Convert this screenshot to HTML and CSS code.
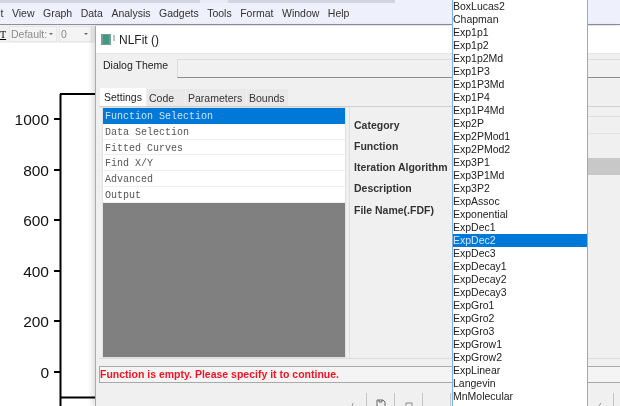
FILE: index.html
```html
<!DOCTYPE html>
<html lang="en">
<head>
<meta charset="utf-8">
<title>NLFit</title>
<link rel="stylesheet" href="styles.css">
</head>
<body>
<div class="app">
  <div class="topstrip"></div>
  <nav class="menubar">
    <span class="menu">t</span><span class="menu">View</span><span class="menu">Graph</span><span class="menu">Data</span><span class="menu">Analysis</span><span class="menu">Gadgets</span><span class="menu">Tools</span><span class="menu">Format</span><span class="menu">Window</span><span class="menu">Help</span>
  </nav>
  <div class="toolbar">
    <span class="tt">T</span>
    <span class="tbcombo wide">Default:<i class="arrow"></i></span>
    <span class="tbcombo num">0<i class="arrow"></i></span>
  </div>
  <div class="canvas">
    <svg class="plot" width="96" height="363" viewBox="0 0 96 363">
      <path class="axis" d="M60.500 51V363M60 51H96M60 354.500H96"/>
      <path class="tick" d="M54 76H60M54 127H60M54 177H60M54 228H60M54 278H60M54 329H60"/>
      <text x="49" y="82">1000</text>
      <text x="49" y="133">800</text>
      <text x="49" y="183">600</text>
      <text x="49" y="234">400</text>
      <text x="49" y="284">200</text>
      <text x="49" y="335">0</text>
    </svg>
  </div>
</div>

<section class="dialog">
  <header class="titlebar">
    <svg class="appicon" width="15" height="13" viewBox="0 0 15 13">
      <rect x="0" y="1" width="10" height="11" fill="#7d9a9c"/>
      <rect x="2" y="2" width="6" height="9" fill="#3c9a80"/>
      <rect x="12" y="2" width="2" height="6" fill="#b5c6c4"/>
    </svg>
    <span class="dtitle">NLFit ()</span>
  </header>
  <div class="themerow">
    <span class="themelabel">Dialog Theme</span>
    <span class="themebox"></span>
  </div>
  <div class="tabs">
    <span class="tab active t-settings">Settings</span>
    <span class="tab t-code">Code</span>
    <span class="tab t-params">Parameters</span>
    <span class="tab t-bounds">Bounds</span>
  </div>
  <div class="pane">
    <div class="tree">
      <div class="node selected">Function Selection</div>
      <div class="node">Data Selection</div>
      <div class="node">Fitted Curves</div>
      <div class="node">Find X/Y</div>
      <div class="node">Advanced</div>
      <div class="node">Output</div>
      <div class="treefill"></div>
    </div>
    <div class="form">
      <div class="field"><label>Category</label><span class="value boxed"></span></div>
      <div class="field"><label>Function</label></div>
      <div class="field"><label>Iteration Algorithm</label><span class="value grey"></span></div>
      <div class="field"><label>Description</label></div>
      <div class="field lastfield"><label>File Name(.FDF)</label></div>
    </div>
  </div>
  <div class="status">Function is empty. Please specify it to continue.</div>
  <div class="buttons">
    <span class="btn"><svg width="8" height="4" viewBox="0 0 8 4"><path d="M3 4L4 1" stroke="#999" fill="none"/></svg></span>
    <span class="btn"><svg width="10" height="7" viewBox="0 0 10 7"><path d="M1 7V1H7L9 3V7M3 1V3H6V1" stroke="#666" fill="none"/></svg></span>
    <span class="btn"><svg width="8" height="4" viewBox="0 0 8 4"><path d="M1 4V1H7V4" stroke="#888" fill="none"/></svg></span>
    <span class="btn"></span>
    <span class="btn last"><svg width="8" height="4" viewBox="0 0 8 4"><path d="M3 4L5 1" stroke="#999" fill="none"/></svg></span>
  </div>
</section>

<ul class="dropdown">
  <li>BoxLucas2</li><li>Chapman</li><li>Exp1p1</li><li>Exp1p2</li><li>Exp1p2Md</li><li>Exp1P3</li><li>Exp1P3Md</li><li>Exp1P4</li><li>Exp1P4Md</li><li>Exp2P</li><li>Exp2PMod1</li><li>Exp2PMod2</li><li>Exp3P1</li><li>Exp3P1Md</li><li>Exp3P2</li><li>ExpAssoc</li><li>Exponential</li><li>ExpDec1</li><li class="hl">ExpDec2</li><li>ExpDec3</li><li>ExpDecay1</li><li>ExpDecay2</li><li>ExpDecay3</li><li>ExpGro1</li><li>ExpGro2</li><li>ExpGro3</li><li>ExpGrow1</li><li>ExpGrow2</li><li>ExpLinear</li><li>Langevin</li><li>MnMolecular</li>
</ul>
</body>
</html>
```
FILE: styles.css
```css
* { box-sizing: border-box; }
html, body { margin: 0; padding: 0; width: 620px; height: 406px; overflow: hidden; background: #fff; }
body { position: relative; font-family: "Liberation Sans", Arial, sans-serif; font-size: 11px; color: #222; filter: blur(.35px); }

.app { display: flex; flex-direction: column; height: 406px; }
.topstrip { height: 3px; flex: none; background: linear-gradient(90deg, #d3d4e0 0 200px, #e9eaf3 200px 228px, #d3d4e0 228px 395px, #eef0fb 395px); }
.menubar { height: 22px; flex: none; display: flex; align-items: center; gap: 8.500px; padding-left: .5px; padding-bottom: 2px; background: #eef0fb; border-bottom: 1px solid #8f8f98; font-size: 10.500px; color: #333; }
.toolbar { height: 19px; flex: none; display: flex; align-items: center; gap: 2px; background: #f0f0f0; border-bottom: 1px solid #e2e2e2; font-size: 10.500px; color: #8b8b8b; }
.tt { width: 7px; font-family: "Liberation Serif", serif; font-size: 10px; color: #000; text-decoration: underline; }
.tbcombo { position: relative; height: 16px; display: flex; align-items: center; padding-left: 1px; background: #f4f4f4; border: 1px solid #e6e6e6; }
.tbcombo.wide { width: 48px; }
.tbcombo.num { width: 33px; }
.arrow { position: absolute; right: 3px; top: 6px; width: 0; height: 0; border-left: 2px solid transparent; border-right: 2px solid transparent; border-top: 2px solid #666; }
.canvas { flex: 1; position: relative; background: #fff; margin-top: -1px; }
.plot { display: block; }
.plot .axis, .plot .tick { fill: none; stroke: #000; stroke-width: 2; }
.plot text { font-family: "Liberation Sans", Arial, sans-serif; font-size: 15.500px; text-anchor: end; fill: #111; }

.dialog { position: absolute; left: 95px; top: 26px; width: 525px; height: 380px; display: flex; flex-direction: column; background: #f0f0f0; border-left: 1px solid #a9a9a9; box-shadow: -3px 0 5px rgba(0,0,0,.12); }
.titlebar { height: 27px; flex: none; display: flex; align-items: center; gap: 3px; padding-left: 5px; background: #fff; }
.appicon { flex: none; }
.dtitle { font-size: 12px; color: #222; }
.themerow { height: 28px; flex: none; display: flex; align-items: flex-start; padding-left: 7px; border-top: 1px solid #e4e4e4; }
.themelabel { width: 74px; flex: none; margin-top: 5px; font-size: 10.500px; color: #222; }
.themebox { flex: 1; height: 19px; margin-top: 5px; background: #f1f1f1; border-top: 1px solid #dcdcdc; border-left: 1px solid #dcdcdc; border-bottom: 1px solid #8e8e8e; }
.tabs { height: 17px; margin-top: 8px; flex: none; display: flex; padding-left: 4px; gap: 1px; font-size: 10.500px; }
.tab { height: 17px; display: flex; align-items: center; background: #e9e9e9; color: #333; }
.tab.active { background: #fff; color: #222; height: 18px; margin-top: -1px; }
.t-settings { width: 46px; padding-left: 4px; }
.t-code { width: 38px; padding-left: 2px; }
.t-params { width: 60px; padding-left: 2px; }
.t-bounds { width: 41px; padding-left: 2px; }
.pane { flex: none; height: 253px; padding: 0 0 0 3px; display: flex; gap: 3px; border-top: 1px solid #cfcfcf; border-bottom: 1px solid #dcdcdc; margin-left: 3px; }
.tree { width: 244px; height: 251px; flex: none; display: flex; flex-direction: column; background: #fff; border: 1px solid #e0e0e0; }
.node { height: 15.800px; flex: none; line-height: 17px; padding-left: 2px; background: #fff; border-bottom: 1px solid #eee; font-family: "Liberation Mono", monospace; font-size: 10px; color: #555; }
.node.selected { background: #0078d7; color: #cfe4f7; border-bottom-color: #0078d7; }
.treefill { flex: 1; background: #808080; }
.form { flex: 1; padding-top: 7px; display: flex; flex-direction: column; border-left: 1px solid #dedede; }
.field { height: 21px; flex: none; display: flex; align-items: center; padding-left: 4px; font-weight: bold; font-size: 10.500px; color: #333; }
.lastfield { margin-top: 1px; }
.value { margin-left: auto; width: 33px; align-self: flex-start; margin-top: 2px; }
.value.boxed { height: 18px; border-top: 1px solid #dcdcdc; border-bottom: 1px solid #e4e4e4; }
.value.grey { height: 17px; background: #c8c8c8; }
.status { flex: none; height: 17px; margin: 7px 0 0 3px; display: flex; align-items: center; padding: 0 0 2px 0; background: #f4f4f4; border: 1px solid #aaa; border-right: none; color: #f01524; font-weight: bold; font-size: 10.500px; }
.buttons { flex: 1; display: flex; align-items: flex-end; padding-left: 243px; overflow: hidden; }
.btn { position: relative; width: 28px; height: 13px; flex: none; display: flex; align-items: flex-end; justify-content: center; border-right: 1px solid #c4c4c4; }
.btn svg { display: block; }
.btn.last { margin-left: auto; margin-right: 6px; }

.dropdown { position: absolute; left: 452px; top: -.5px; width: 136px; height: 407px; margin: 0; padding: 0; list-style: none; background: #fff; border-left: 1px solid #7fb1e2; border-right: 1px solid #7fb1e2; font-size: 10.500px; line-height: 13.030px; color: #222; }
.dropdown li { height: 13.030px; white-space: nowrap; }
.dropdown li.hl { background: #0078d7; color: #d5e8f8; }
```
